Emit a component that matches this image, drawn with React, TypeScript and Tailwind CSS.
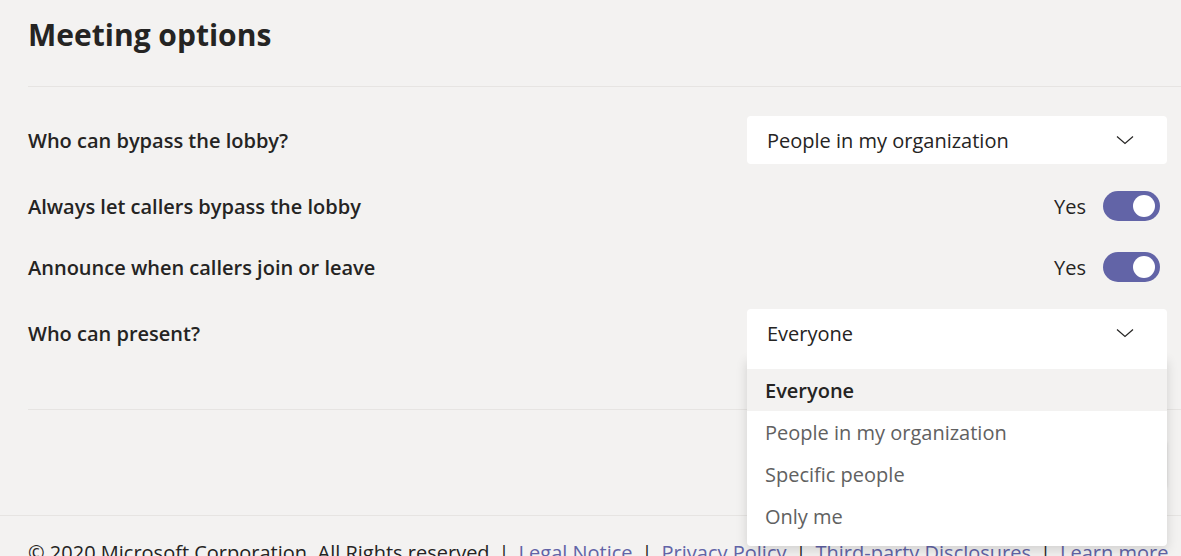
const font = { fontFamily: '"Open Sans", "Noto Sans", sans-serif' };

function Chevron() {
  return (
    <svg width="18" height="10" viewBox="0 0 18 10" fill="none">
      <path d="M1 1.5 L9 8.5 L17 1.5" stroke="#252423" strokeWidth="1.2" />
    </svg>
  );
}

function Toggle() {
  return (
    <div className="flex items-center gap-[17px]">
      <span className="text-[20px] translate-y-[1px] text-[#252423]">Yes</span>
      <div className="w-[57px] h-[30px] rounded-full bg-[#6264a7] flex items-center justify-end pr-[5px]">
        <div className="w-[22px] h-[22px] rounded-full bg-white" />
      </div>
    </div>
  );
}

function Select({ value, open }: { value: string; open?: boolean }) {
  return (
    <div className="relative w-[420px]">
      <div className={"relative z-20 h-[48px] bg-white flex items-center justify-between pl-[20px] pr-[33px] " + (open ? "rounded-t-[4px]" : "rounded-[4px]")}>
        <span className="text-[20px] translate-y-[1px] text-[#252423]">{value}</span>
        <Chevron />
      </div>
      {open && (
        <ul className="absolute left-0 top-[48px] w-[420px] bg-white rounded-b-[4px] pt-[12px] pb-[9px] shadow-[0_4px_12px_rgba(0,0,0,0.14)] z-10">
          <li className="h-[42px] flex items-center pl-[18px] bg-[#f3f2f1] text-[20px] font-semibold text-[#252423]">
            <span className="translate-y-[1px]">Everyone</span>
          </li>
          <li className="h-[42px] flex items-center pl-[18px] text-[20px] text-[#616161]">
            <span className="translate-y-[1px]">People in my organization</span>
          </li>
          <li className="h-[42px] flex items-center pl-[18px] text-[20px] text-[#616161]">
            <span className="translate-y-[1px]">Specific people</span>
          </li>
          <li className="h-[42px] flex items-center pl-[18px] text-[20px] text-[#616161]">
            <span className="translate-y-[1px]">Only me</span>
          </li>
        </ul>
      )}
    </div>
  );
}

export default function App() {
  return (
    <div className="w-[1181px] h-[556px] overflow-hidden bg-[#f3f2f1] text-[#252423]" style={font}>
      <div className="pl-[28px]">
        <div className="h-[87px] border-b border-[#e6e4e2] pt-[14px]">
          <h1 className="text-[30px] leading-[42px] font-bold">Meeting options</h1>
        </div>

        <div className="pr-[14px] pt-[29px]">
          <div className="flex items-center justify-between">
            <span className="text-[20px] translate-y-[1px] font-semibold">Who can bypass the lobby?</span>
            <Select value="People in my organization" />
          </div>
          <div className="flex items-center justify-between mt-[27px] pr-[7px]">
            <span className="text-[20px] translate-y-[1px] font-semibold">Always let callers bypass the lobby</span>
            <Toggle />
          </div>
          <div className="flex items-center justify-between mt-[31px] pr-[7px]">
            <span className="text-[20px] translate-y-[1px] font-semibold">Announce when callers join or leave</span>
            <Toggle />
          </div>
          <div className="flex items-center justify-between mt-[27px]">
            <span className="text-[20px] translate-y-[1px] font-semibold">Who can present?</span>
            <Select value="Everyone" open />
          </div>
        </div>

        <div className="mt-[52px] border-t border-[#e6e4e2] h-[106px] pr-[14px] pt-[30px] flex justify-end">
          <button className="w-[96px] h-[48px] rounded-[4px] bg-[#e1dfdd] text-[20px] font-semibold text-[#c8c6c4] shadow-[0_1px_3px_rgba(0,0,0,0.12)]">Save</button>
        </div>
      </div>

      <div className="border-t border-[#e6e4e2] pl-[28px] pt-[22px] text-[20px] whitespace-nowrap">
        <span>© 2020 Microsoft Corporation. All Rights reserved</span>
        <span className="mx-[9px]">|</span>
        <a className="text-[#6264a7]">Legal Notice</a>
        <span className="mx-[9px]">|</span>
        <a className="text-[#6264a7]">Privacy Policy</a>
        <span className="mx-[9px]">|</span>
        <a className="text-[#6264a7]">Third-party Disclosures</a>
        <span className="mx-[9px]">|</span>
        <a className="text-[#6264a7]">Learn more</a>
      </div>
    </div>
  );
}
